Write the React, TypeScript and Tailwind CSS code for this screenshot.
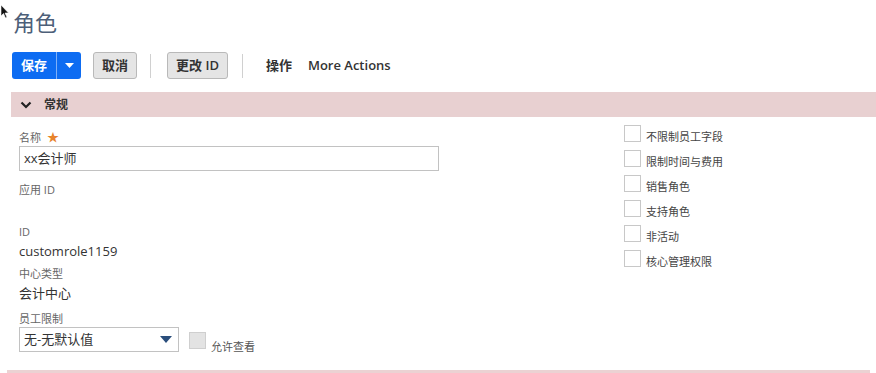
const font = { fontFamily: '"Open Sans", "Noto Sans CJK SC", sans-serif' };

function Check({ label }: { label: string }) {
  return (
    <div className="flex h-[25px] items-start gap-[5px]">
      <span className="mt-[1px] block h-[17px] w-[17px] border border-[#c8c8c8] bg-white" />
      <span className="mt-[4px] text-[11px] leading-[17px] text-[#444]">{label}</span>
    </div>
  );
}

export default function App() {
  const rights = ["不限制员工字段", "限制时间与费用", "销售角色", "支持角色", "非活动", "核心管理权限"];
  return (
    <div className="relative h-[373px] w-[876px] overflow-hidden bg-white" style={font}>
      <svg className="absolute left-0 top-[5px]" width="10" height="14" viewBox="0 0 10 14">
        <path d="M1 0 L1 11 L3.5 8.5 L5.5 13 L7 12.3 L5 8 L8.5 8 Z" fill="#111" stroke="#fff" strokeWidth="0.6" />
      </svg>
      <h1 className="pl-[13px] pt-[7px] text-[22px] leading-[30px] font-normal text-[#4d5f79]">角色</h1>

      <div className="ml-[12px] mt-[15px] flex h-[27px] items-center">
        <div className="flex h-[27px] overflow-hidden rounded-[3px] bg-[#0d6cf2] text-white">
          <span className="flex items-center px-[9px] text-[13px] font-semibold">保存</span>
          <span className="w-px bg-[#7fb0f8]" />
          <span className="flex w-[24px] items-center justify-center">
            <svg width="9" height="5" viewBox="0 0 9 5"><path d="M0 0 H9 L4.5 5 Z" fill="#fff" /></svg>
          </span>
        </div>
        <span className="ml-[12px] flex h-[27px] items-center rounded-[3px] border border-[#b9b9b9] bg-[#e5e5e5] px-[8px] text-[13px] font-semibold text-[#333]">取消</span>
        <span className="ml-[13px] h-[24px] w-px bg-[#d0d0d0]" />
        <span className="ml-[16px] flex h-[27px] items-center rounded-[3px] border border-[#b9b9b9] bg-[#e5e5e5] px-[8px] text-[13px] font-semibold text-[#333]">更改 ID</span>
        <span className="ml-[14px] h-[24px] w-px bg-[#d0d0d0]" />
        <span className="ml-[23px] text-[13px] font-semibold text-[#333]">操作</span>
        <span className="ml-[16px] text-[13px] font-semibold text-[#333]">More Actions</span>
      </div>

      <div className="ml-[11px] mt-[13px] flex h-[25px] items-center bg-[#e8d0d1]">
        <svg className="ml-[9px]" width="12" height="8" viewBox="0 0 12 8">
          <path d="M1.5 1.5 L6 6 L10.5 1.5" fill="none" stroke="#222" strokeWidth="2.2" />
        </svg>
        <span className="ml-[12px] text-[12px] font-semibold text-[#333]">常规</span>
      </div>

      <div className="flex">
        <div className="ml-[19px] flex w-[420px] flex-col text-[#333]">
          <div className="mt-[13px] flex items-center gap-[6px] text-[11px] leading-[16px] text-[#666]">
            名称 <span className="text-[12px] text-[#e8832b]">★</span>
          </div>
          <div className="flex h-[25px] w-[420px] items-center border border-[#c2c2c2] px-[4px] text-[13px]">xx会计师</div>
          <div className="mt-[11px] text-[11px] leading-[16px] text-[#666]">应用 ID</div>
          <div className="mt-[26px] text-[11px] leading-[16px] text-[#666]">ID</div>
          <div className="mt-[2px] text-[13px] leading-[18px]">customrole1159</div>
          <div className="mt-[6px] text-[11px] leading-[16px] text-[#666]">中心类型</div>
          <div className="mt-[2px] text-[13px] leading-[18px]">会计中心</div>
          <div className="mt-[9px] text-[11px] leading-[16px] text-[#666]">员工限制</div>
          <div className="flex items-end">
            <div className="flex h-[25px] w-[160px] items-center justify-between border border-[#c2c2c2] pl-[4px] pr-[6px] text-[13px]">
              无-无默认值
              <svg width="12" height="7" viewBox="0 0 12 7"><path d="M0 0 H12 L6 7 Z" fill="#2a4e7c" /></svg>
            </div>
            <span className="mb-[3px] ml-[10px] block h-[17px] w-[17px] border border-[#cfcfcf] bg-[#e3e3e3]" />
            <span className="mb-[-3px] ml-[5px] text-[11px] leading-[16px] text-[#555]">允许查看</span>
          </div>
        </div>
        <div className="ml-[185px] mt-[7px] flex flex-col">
          {rights.map((r) => (
            <Check key={r} label={r} />
          ))}
        </div>
      </div>

      <div className="absolute bottom-0 left-[7px] h-[3px] w-[863px] bg-[#ebd2d3]" />
    </div>
  );
}
